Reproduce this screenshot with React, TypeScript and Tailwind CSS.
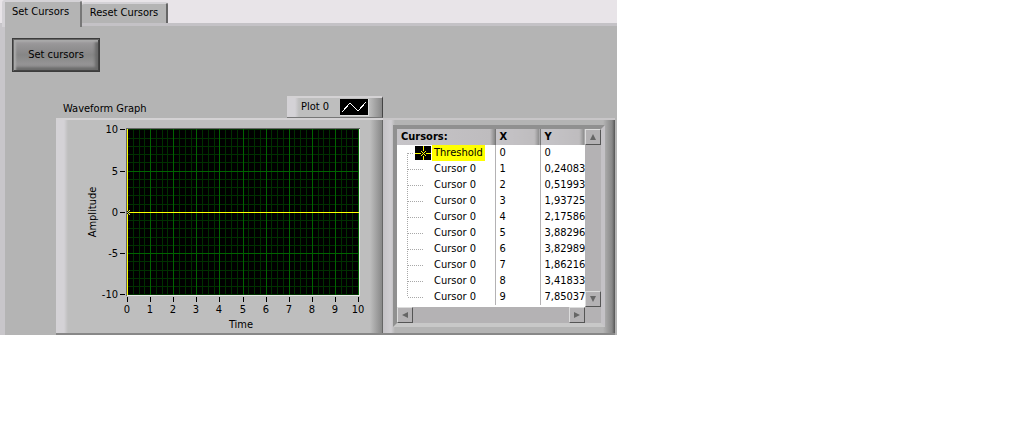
import { useState } from "react";

const cursors = [
  { name: "Threshold", x: "0", y: "0" },
  { name: "Cursor 0", x: "1", y: "0,24083" },
  { name: "Cursor 0", x: "2", y: "0,51993" },
  { name: "Cursor 0", x: "3", y: "1,93725" },
  { name: "Cursor 0", x: "4", y: "2,17586" },
  { name: "Cursor 0", x: "5", y: "3,88296" },
  { name: "Cursor 0", x: "6", y: "3,82989" },
  { name: "Cursor 0", x: "7", y: "1,86216" },
  { name: "Cursor 0", x: "8", y: "3,41833" },
  { name: "Cursor 0", x: "9", y: "7,85037" },
];

const range = (n: number) => Array.from({ length: n }, (_, i) => i);
const px = (v: number) => 71 + Math.round(v * 23.1);
const py = (v: number) => 92 - Math.round(v * 8.25);

function Graph() {
  return (
    <svg width="327" height="213" className="block" shapeRendering="crispEdges" role="img" aria-label="Waveform graph">
      <rect x="70" y="8" width="234" height="168" fill="#666" />
      <rect x="71" y="9" width="233" height="167" fill="#e8e8e8" />
      <rect x="71" y="9" width="232" height="166" fill="#000" />
      {range(41).map((i) => (
        <rect key={i} x={px(i / 4)} y="9" width="1" height="166" fill="#003000" />
      ))}
      {range(21).map((i) => (
        <rect key={i} x="71" y={py(i - 10)} width="232" height="1" fill="#003000" />
      ))}
      {range(11).map((i) => (
        <rect key={i} x={px(i)} y="9" width="1" height="166" fill="#006400" />
      ))}
      {[-5, 5].map((v) => (
        <rect key={v} x="71" y={py(v)} width="232" height="1" fill="#006400" />
      ))}
      <rect x="71" y="9" width="1" height="166" fill="#ffff00" />
      <rect x="71" y={py(0)} width="232" height="1" fill="#ffff00" />
      <rect x="71" y="91" width="2" height="3" />
      <path d="M71 92h1v1h-1zM72 91h1v1h-1zM73 90h1v1h-1zM72 93h1v1h-1zM73 94h1v1h-1z" fill="#c8e070" />
      <g fontSize="11" textAnchor="end">
        {[10, 5, 0, -5, -10].map((v) => (
          <g key={v}>
            <text x="62" y={py(v) + 4}>{v}</text>
            <rect x="64" y={py(v)} width="5" height="1" />
          </g>
        ))}
      </g>
      <g fontSize="11" textAnchor="middle">
        {range(11).map((v) => (
          <g key={v}>
            <rect x={px(v)} y="177" width="1" height="5" />
            <text x={px(v)} y="193">{v}</text>
          </g>
        ))}
        <text x="185" y="208">Time</text>
        <text transform="translate(40 92) rotate(-90)">Amplitude</text>
      </g>
    </svg>
  );
}

function ScrollButton({ label, d }: { label: string; d: string }) {
  return (
    <button
      aria-label={label}
      className="flex size-4 shrink-0 items-center justify-center border border-t-[#dcdcdc] border-l-[#dcdcdc] border-r-[#555] border-b-[#555] bg-[#b4b2b4]"
    >
      <svg width="8" height="8" fill="#666">
        <path d={d} />
      </svg>
    </button>
  );
}

function CursorTable() {
  const head =
    "h-4 border-r border-[#777] bg-[linear-gradient(to_right,#c6c4c8_0,#bebcbe_calc(100%-5px),#888_100%)] p-0 pl-1 text-left leading-4";
  return (
    <div className="flex">
      <div className="w-[188px] overflow-hidden bg-white">
        <table className="w-[188px] table-fixed border-collapse">
          <thead>
            <tr>
              <th className={head + " w-[98px]"}>Cursors:</th>
              <th className={head + " w-[45px]"}>X</th>
              <th className={head + " w-[45px]"}>Y</th>
            </tr>
          </thead>
          <tbody>
            {cursors.map((c, i) => (
              <tr key={i} className="h-4">
                <td className="border-r border-[#b4b2b4] p-0">
                  <div className="flex h-4 pl-2">
                    <svg width="27" height="16" className="shrink-0" shapeRendering="crispEdges">
                      <path
                        d={i === 0 ? "M2.5 8V16M3 8.5H9" : i === 9 ? "M2.5 0V8M3 8.5H19" : "M2.5 0V16M3 8.5H19"}
                        stroke="#a8a8a8"
                        strokeDasharray="1 1"
                      />
                      {i === 0 && (
                        <>
                          <rect x="10" y="1" width="16" height="14" />
                          <path d="M10 8h6v1h-6zM21 8h5v1h-5zM18 1h1v5h-1zM18 11h1v4h-1z" fill="#ffff00" />
                          <path
                            d="M16 6h1v1h-1zM17 7h1v1h-1zM18 8h1v1h-1zM19 9h1v1h-1zM20 10h1v1h-1zM20 6h1v1h-1zM19 7h1v1h-1zM17 9h1v1h-1zM16 10h1v1h-1z"
                            fill="#ffff00"
                          />
                        </>
                      )}
                    </svg>
                    <span className={i === 0 ? "bg-[#ff0] px-[2px] leading-[15px]" : "px-[2px] leading-[15px]"}>{c.name}</span>
                  </div>
                </td>
                <td className="border-r border-[#b4b2b4] p-0 pl-1 align-top leading-[15px]">{c.x}</td>
                <td className="p-0 pl-1 align-top leading-[15px] whitespace-nowrap">{c.y}</td>
              </tr>
            ))}
          </tbody>
        </table>
        <div className="h-[2px]" />
        <div className="flex justify-between bg-[#b4b2b4]">
          <ScrollButton label="Scroll left" d="M1 4L7 1V7Z" />
          <ScrollButton label="Scroll right" d="M7 4L1 1V7Z" />
        </div>
      </div>
      <div className="flex w-4 flex-col justify-between bg-[#b4b2b4] pb-4">
        <ScrollButton label="Scroll up" d="M4 1L7 7H1Z" />
        <ScrollButton label="Scroll down" d="M4 7L1 1H7Z" />
      </div>
    </div>
  );
}

export default function App() {
  const [tab, setTab] = useState(0);
  return (
    <div className="min-h-screen bg-white font-['DejaVu_Sans_Condensed','DejaVu_Sans',sans-serif] text-[11px] text-black">
      <main className="w-fit bg-[#b4b4b4]">
        <div role="tablist" className="flex h-[23px] items-end bg-[#e8e4e8] pl-[2px]">
          <button
            role="tab"
            aria-selected={tab === 0}
            onClick={() => setTab(0)}
            className="relative -mb-1 h-[27px] w-20 rounded-t-[3px] border-t-2 border-r-2 border-l-[3px] border-t-[#d4d2d6] border-r-[#777] border-l-[#d4d2d6] bg-[#b4b4b4] pr-1 pb-1"
          >
            Set Cursors
          </button>
          <button
            role="tab"
            aria-selected={tab === 1}
            onClick={() => setTab(1)}
            className="h-[21px] w-[86px] rounded-t-[3px] border-t-2 border-r-2 border-t-[#d4d2d6] border-r-[#666] bg-[#b4b4b4]"
          >
            Reset Cursors
          </button>
        </div>
        <section className="border-t-[3px] border-l-[5px] border-t-[#c4c2c6] border-l-[#c8c6ca] pr-[2px]">
          <button className="mt-3 ml-[7px] block h-[34px] w-[88px] border border-[#3c3c3c] bg-[linear-gradient(#a09ea0,#868686,#a09ea0)] shadow-[inset_1px_1px_0_#666,inset_-1px_-1px_0_#444,inset_3px_3px_2px_#aaa,inset_-4px_-4px_3px_#6a6a6a]">
            Set cursors
          </button>
          <div className="mt-6 ml-[51px] flex w-[327px] items-end justify-between">
            <h2 className="pb-[2px] pl-[7px] leading-[14px]">Waveform Graph</h2>
            <div className="flex h-[22px] w-24 items-center justify-between border-t-2 border-r border-b border-t-[#d4d2d4] border-r-[#444] border-b-[#777] bg-[linear-gradient(to_right,#d4d2d6_0,#d4d2d6_8px,#bebebe_12px,#bebebe_82px,#888_100%)] pr-[13px] pl-[14px]">
              Plot 0
              <svg width="29" height="17" shapeRendering="crispEdges">
                <rect width="29" height="17" fill="#ddd" />
                <rect width="28" height="16" />
                <path d="M2 13L10 4L18 12L26 3" fill="none" stroke="#fff" />
              </svg>
            </div>
          </div>
          <div className="ml-[51px] flex">
            <div className="border-t-2 border-b-2 border-t-[#d4d2d4] border-b-[#888] bg-[linear-gradient(to_right,#d4d2d6_0,#d4d2d6_8px,#bebebe_12px,#bebebe_314px,#888_326px,#444_100%)]">
              <Graph />
            </div>
            <div className="border-t-2 border-b-2 border-t-[#c8c6c8] border-b-[#888] bg-[linear-gradient(to_right,#c4c2c6_0,#d0ced2_8px,#b4b4b4_12px,#b4b4b4_220px,#888_229px,#555_100%)] pt-[5px] pr-[10px] pl-[10px]">
              <div className="border-4 border-t-[#909090] border-r-[#c4c2c6] border-b-[#c8c8c8] border-l-[#909090]">
                <CursorTable />
              </div>
            </div>
          </div>
        </section>
      </main>
    </div>
  );
}
